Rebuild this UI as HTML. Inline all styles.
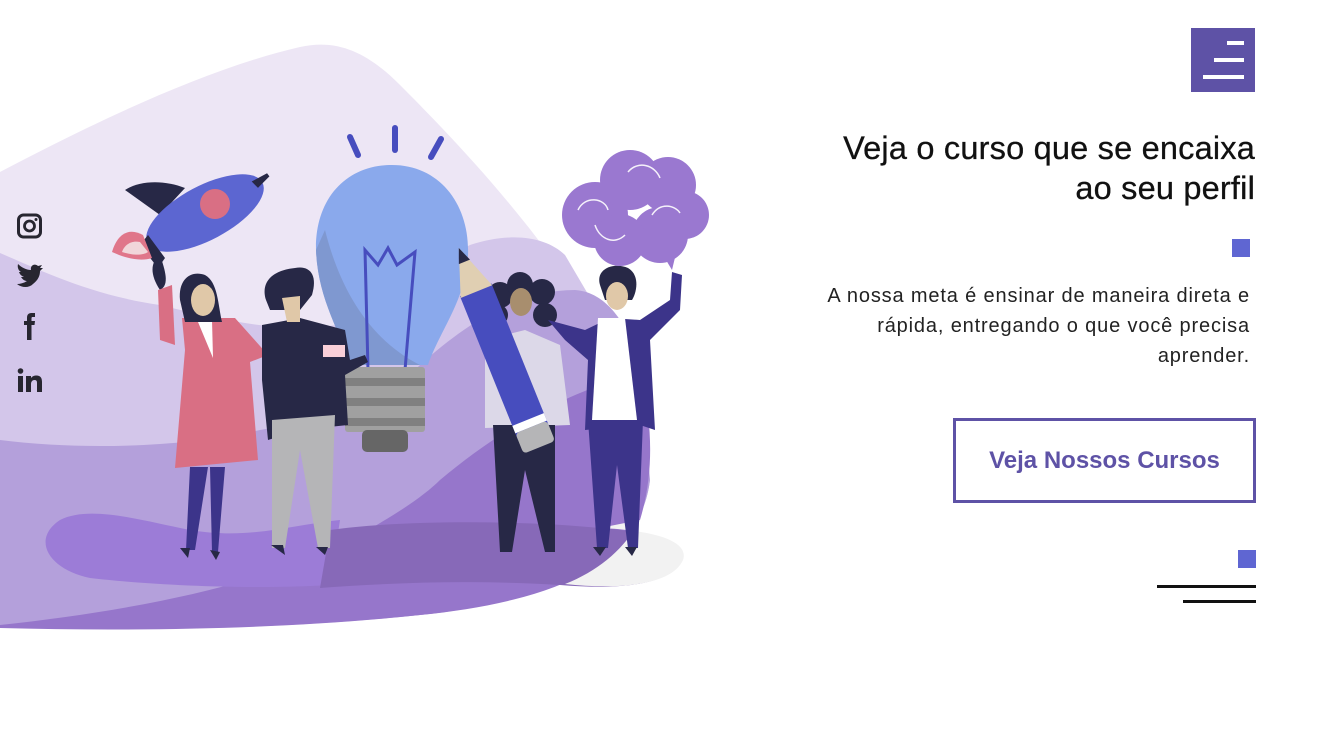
<!DOCTYPE html>
<html><head><meta charset="utf-8"><style>
html,body{margin:0;padding:0;background:#fff;}
body{width:1325px;height:749px;position:relative;overflow:hidden;font-family:"Liberation Sans",sans-serif;}
.abs{position:absolute;}
h1{position:absolute;right:70px;top:128px;margin:0;font-size:32.5px;font-weight:normal;line-height:40px;text-align:right;color:#111;letter-spacing:0.2px;-webkit-text-stroke:0.3px #111;}
p{position:absolute;right:75px;top:281px;margin:0;font-size:20px;line-height:30px;text-align:right;color:#222;width:520px;letter-spacing:0.85px;}
.btn{position:absolute;left:953px;top:418px;width:297px;height:79px;border:3px solid #5e52a6;color:#5e52a6;font-weight:bold;font-size:24px;display:flex;align-items:center;justify-content:center;}
</style></head><body>
<svg class="abs" style="left:0;top:0" width="720" height="650" viewBox="0 0 720 650">
<path d="M0 172 C80 130 200 70 300 47 C340 38 370 55 400 85 C460 145 540 230 600 330 L640 400 L650 480 C640 560 560 600 420 615 C250 632 100 630 0 625 Z" fill="#ede6f5"/>
<path d="M0 253 C40 270 90 295 160 305 C240 325 300 335 350 322 C400 305 430 265 470 245 C510 232 545 236 565 255 L615 340 L650 480 C640 560 560 600 420 615 C250 632 100 630 0 625 Z" fill="#d3c6ea"/>
<path d="M0 440 C80 450 180 448 260 430 C330 418 380 405 420 365 C470 320 520 290 575 290 C605 292 625 320 640 360 L650 480 C640 560 560 600 420 615 C250 632 100 630 0 625 Z" fill="#b4a0db"/>
<path d="M0 625 C120 612 240 590 330 550 C380 525 420 500 440 480 C500 430 560 395 640 372 C652 420 655 470 640 520 C610 580 520 605 420 615 C300 628 150 632 0 628 Z" fill="#9676cb"/>
<path d="M60 520 C90 505 140 520 190 530 C250 540 290 525 340 520 L330 585 C250 590 150 585 90 578 C50 570 30 540 60 520 Z" fill="#9c7cd7"/>
<path d="M330 530 C400 520 520 520 600 528 C650 532 690 540 682 560 C670 585 620 590 560 585 C480 580 400 582 320 588 Z" fill="#8769b8"/>
<path d="M600 528 C650 530 690 540 683 560 C672 585 620 590 565 584 C600 570 625 548 640 520 Z" fill="#f2f2f2"/>
<g stroke="#474dbe" stroke-width="6" stroke-linecap="round"><line x1="350" y1="137" x2="358" y2="155"/><line x1="395" y1="128" x2="395" y2="150"/><line x1="441" y1="139" x2="431" y2="157"/></g>
<path d="M392 165 C440 165 470 205 468 255 C466 300 440 330 428 365 L350 365 C340 330 318 300 316 250 C315 200 345 165 392 165 Z" fill="#8aa9ec"/>
<path d="M325 230 C340 290 370 340 420 365 L350 365 C340 330 318 300 316 250 Z" fill="#7f98d0"/>
<path d="M368 370 L365 250 L378 265 L388 248 L397 265 L415 252 L405 370" fill="none" stroke="#474dbe" stroke-width="3"/>
<rect x="345" y="367" width="80" height="65" rx="3" fill="#a0a0a0"/>
<g fill="#808080"><rect x="345" y="378" width="80" height="8"/><rect x="345" y="398" width="80" height="8"/><rect x="345" y="418" width="80" height="8"/></g>
<rect x="362" y="430" width="46" height="22" rx="5" fill="#666"/>
<path d="M125 190 C140 180 165 180 185 188 L160 215 Z" fill="#272846"/>
<path d="M160 255 C165 270 170 285 160 290 C150 275 150 262 160 255 Z" fill="#272846"/>
<ellipse cx="205" cy="213" rx="65" ry="27" transform="rotate(-28 205 213)" fill="#5c66d1"/>
<path d="M258 185 L268 175 L255 182 Z" fill="#272846" stroke="#272846" stroke-width="4"/>
<path d="M148 235 L165 258 L158 268 L140 245 Z" fill="#272846"/>
<circle cx="215" cy="204" r="15" fill="#d96f84"/>
<path d="M143 235 C130 228 118 232 112 252 C125 258 140 262 152 258 Z" fill="#e0768a"/>
<path d="M140 242 C130 240 124 246 122 252 C132 255 142 256 148 252 Z" fill="#f1d6da"/>
<path d="M158 290 L172 285 L175 345 L160 340 Z" fill="#d96f84"/>
<path d="M182 318 L235 318 L268 355 L250 362 L258 460 L175 468 L185 350 Z" fill="#d96f84"/>
<path d="M198 322 L212 320 L213 358 Z" fill="#fff"/>
<path d="M180 300 C178 278 192 270 205 275 C218 282 218 305 222 322 L185 322 Z" fill="#272846"/>
<ellipse cx="203" cy="300" rx="12" ry="16" fill="#e0c8a8"/>
<path d="M190 467 L208 467 L195 550 L186 550 Z M210 467 L225 467 L218 552 L212 552 Z" fill="#3c348a"/>
<path d="M180 548 L190 548 L188 558 Z M210 550 L220 552 L216 560 Z" fill="#272846"/>
<path d="M262 325 L300 318 L345 330 L350 360 L365 355 L368 362 L345 375 L348 425 L300 430 L268 440 L262 380 Z" fill="#272846"/>
<rect x="323" y="345" width="22" height="12" fill="#f9cfd8"/>
<path d="M272 420 L335 415 L330 548 L318 548 L300 450 L285 548 L272 548 Z" fill="#b5b5b7"/>
<path d="M266 300 C260 280 275 270 295 268 C310 265 318 275 312 295 L300 310 L270 310 Z" fill="#272846"/>
<path d="M282 298 L300 296 L300 322 L287 322 Z" fill="#e0c8a8"/>
<path d="M271 545 L283 545 L285 555 Z M316 547 L328 547 L325 555 Z" fill="#272846"/>
<path d="M485 340 L525 330 L560 345 L570 425 L485 428 Z" fill="#dcd8e8"/>
<path d="M493 425 L555 425 L555 552 L545 552 L525 470 L512 552 L500 552 Z" fill="#272846"/>
<g fill="#272846"><circle cx="500" cy="295" r="13"/><circle cx="520" cy="285" r="13"/><circle cx="542" cy="292" r="13"/><circle cx="497" cy="315" r="11"/><circle cx="545" cy="315" r="12"/></g>
<ellipse cx="521" cy="302" rx="11" ry="14" fill="#a88e6e"/>
<g transform="rotate(-22 500 350)"><rect x="483" y="285" width="34" height="155" fill="#474dbe"/><rect x="483" y="425" width="34" height="8" fill="#fff"/><rect x="483" y="433" width="34" height="22" rx="4" fill="#b5b5b7"/><path d="M483 287 L500 240 L517 287 Z" fill="#e0cfb2"/><path d="M494 255 L500 240 L506 255 Z" fill="#272846"/></g>
<path d="M548 320 L585 330 L610 318 L640 320 L670 300 L672 272 L682 275 L680 310 L650 340 L655 430 L640 425 L585 430 L588 360 L565 340 Z" fill="#3c348a"/>
<path d="M598 318 L625 318 L637 420 L592 420 Z" fill="#fff"/>
<path d="M588 420 L643 420 L638 548 L628 548 L617 465 L608 548 L597 548 Z" fill="#3c348a"/>
<path d="M600 285 C595 268 615 262 628 268 C640 275 637 292 632 300 L605 300 Z" fill="#272846"/>
<ellipse cx="617" cy="296" rx="11" ry="14" fill="#e0c8a8"/>
<path d="M593 547 L606 547 L600 556 Z M625 547 L637 547 L632 556 Z" fill="#272846"/>
<g fill="#9a78d0"><circle cx="595" cy="215" r="33"/><circle cx="630" cy="180" r="30"/><circle cx="668" cy="185" r="28"/><circle cx="685" cy="215" r="24"/><circle cx="660" cy="235" r="28"/><circle cx="620" cy="240" r="26"/><path d="M660 250 L672 270 L678 245 Z"/></g>
<g fill="none" stroke="#fff" stroke-width="1.5" opacity="0.9"><path d="M578 210 C585 195 605 198 608 210"/><path d="M628 172 C638 160 655 165 660 178"/><path d="M652 215 C660 202 675 205 680 213"/><path d="M595 225 C600 240 615 245 625 235"/></g>
</svg>
<svg class="abs" style="left:16px;top:212px" width="28" height="185" viewBox="0 0 28 185">
<rect x="2.5" y="3" width="22" height="22" rx="5" fill="none" stroke="#272630" stroke-width="3"/>
<circle cx="13.5" cy="14" r="5" fill="none" stroke="#272630" stroke-width="2.8"/><circle cx="20" cy="7.5" r="1.5" fill="#272630"/>
<g transform="translate(0 14)"><path d="M1 58 C6 62 13 62 17 58 C22 54 24 50 24 45 L27 42 L24 42 L26 39 L22 40 C19 37 14 39 15 44 C10 44 5 41 2 38 C1 42 3 45 5 46 L3 46 C4 49 6 50 8 51 L5 51 C7 54 9 55 11 55 C8 57 4 58 1 58 Z" fill="#272630"/></g>
<path d="M11 128 L11 113 L8 113 L8 109 L11 109 L11 106 C11 102 13 101 16 101 L19 101 L19 105 L16.5 105 C15.5 105 15.5 106 15.5 107 L15.5 109 L19 109 L18.5 113 L15.5 113 L15.5 128 Z" fill="#272630"/>
<circle cx="4.5" cy="159" r="2.8" fill="#272630"/><rect x="2" y="164" width="5" height="16" fill="#272630"/>
<path d="M10 164 L15 164 L15 166 C16.5 164 18.5 163.5 20.5 163.5 C24.5 163.5 26 166 26 170 L26 180 L21 180 L21 171 C21 169 20.5 168 18.5 168 C16.5 168 15 169.5 15 172 L15 180 L10 180 Z" fill="#272630"/>
</svg>
<div class="abs" style="left:1191px;top:28px;width:64px;height:64px;background:#5e52a6;"></div>
<div class="abs" style="left:1227px;top:41px;width:17px;height:4px;background:#fff;"></div>
<div class="abs" style="left:1214px;top:58px;width:30px;height:4px;background:#fff;"></div>
<div class="abs" style="left:1203px;top:75px;width:41px;height:4px;background:#fff;"></div>
<h1>Veja o curso que se encaixa<br>ao seu perfil</h1>
<div class="abs" style="left:1232px;top:239px;width:18px;height:18px;background:#5f66d2;"></div>
<p>A nossa meta é ensinar de maneira direta e<br>rápida, entregando o que você precisa<br>aprender.</p>
<div class="btn">Veja Nossos Cursos</div>
<div class="abs" style="left:1238px;top:550px;width:18px;height:18px;background:#5f66d2;"></div>
<div class="abs" style="left:1157px;top:585px;width:99px;height:3px;background:#111;"></div>
<div class="abs" style="left:1183px;top:600px;width:73px;height:3px;background:#111;"></div>
</body></html>
